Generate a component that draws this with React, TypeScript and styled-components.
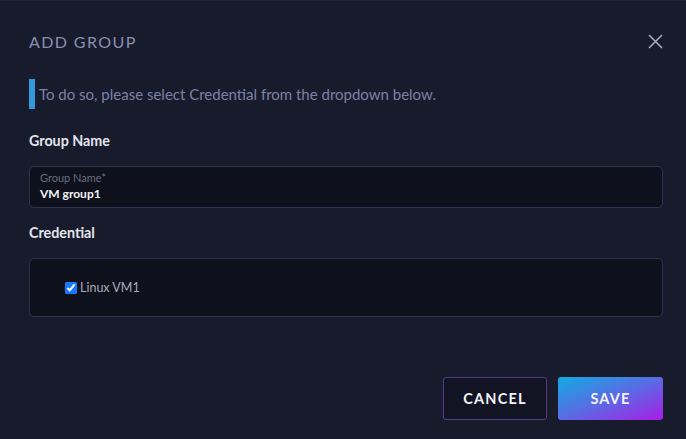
import React, { FC } from "react";
import styled, { createGlobalStyle } from "styled-components";

const GlobalStyle = createGlobalStyle`
  html, body {
    margin: 0;
    padding: 0;
    background: #181b2b;
  }
  body {
    font-family: Lato, "Noto Sans", "Liberation Sans", sans-serif;
    -webkit-font-smoothing: antialiased;
  }
`;

const Dialog = styled.div`
  width: 686px;
  height: 439px;
  box-sizing: border-box;
  padding: 27px 23px 0 29px;
  background: #181b2b;
  border-top: 1px solid #1f2336;
  display: flex;
  flex-direction: column;
`;

const Header = styled.div`
  display: flex;
  align-items: center;
  justify-content: space-between;
  height: 26px;
`;

const Title = styled.h2`
  margin: 0;
  font-size: 16px;
  font-weight: 400;
  letter-spacing: 1.4px;
  color: #8a8eb3;
`;

const CloseButton = styled.button`
  background: none;
  border: none;
  padding: 0;
  margin-right: -2px;
  width: 20px;
  height: 20px;
  display: flex;
  align-items: center;
  justify-content: center;
  cursor: pointer;
`;

const Info = styled.div`
  display: flex;
  align-items: center;
  gap: 4px;
  margin-top: 25px;
  height: 30px;
  font-size: 15px;
  color: #7d81a6;
`;

const InfoBar = styled.span`
  flex: 0 0 6px;
  width: 6px;
  height: 30px;
  background: #3398dc;
`;

const Label = styled.div<{ $gap: number }>`
  margin-top: ${(p) => p.$gap}px;
  line-height: 20px;
  font-size: 14.3px;
  font-weight: 700;
  color: #e4e5ee;
`;

const Field = styled.div<{ $height: number }>`
  margin-top: 15px;
  height: ${(p) => p.$height}px;
  box-sizing: border-box;
  border: 1px solid #2d3250;
  border-radius: 5px;
  background: #0e101c;
`;

const InputField = styled(Field)`
  padding: 4px 10px 0;
  display: flex;
  flex-direction: column;
`;

const FloatLabel = styled.span`
  font-size: 11px;
  line-height: 13px;
  color: #6a6d80;
`;

const Value = styled.span`
  margin-top: 2px;
  font-size: 12px;
  font-weight: 700;
  line-height: 16px;
  color: #f2f2f6;
`;

const OptionList = styled(Field)`
  display: flex;
  align-items: center;
  padding-left: 32px;
`;

const Option = styled.label`
  display: flex;
  align-items: center;
  font-size: 12.5px;
  color: #a9acbb;
  input {
    margin: 0 3px 0 3px;
    width: 12px;
    height: 12px;
    accent-color: #1677ff;
  }
`;

const Footer = styled.div`
  margin-top: 60px;
  display: flex;
  justify-content: flex-end;
  gap: 11px;
`;

const Button = styled.button<{ $primary?: boolean }>`
  width: ${(p) => (p.$primary ? 105 : 104)}px;
  height: 43px;
  box-sizing: border-box;
  border-radius: 3px;
  font-family: inherit;
  font-size: 14.5px;
  font-weight: 700;
  letter-spacing: 1.2px;
  color: #f4f4f8;
  cursor: pointer;
  border: ${(p) => (p.$primary ? "none" : "1px solid #543c8a")};
  background: ${(p) =>
    p.$primary
      ? "linear-gradient(to bottom right, #12abe2 0%, #5a6be4 50%, #a81de6 100%)"
      : "#121424"};
`;

const App: FC = () => {
  return (
    <>
      <GlobalStyle />
      <Dialog>
        <Header>
          <Title>ADD GROUP</Title>
          <CloseButton aria-label="Close">
            <svg width="15" height="15" viewBox="0 0 15 15">
              <path d="M1 1L14 14M14 1L1 14" stroke="#a7a9b6" strokeWidth="1.6" />
            </svg>
          </CloseButton>
        </Header>
        <Info>
          <InfoBar />
          To do so, please select Credential from the dropdown below.
        </Info>
        <Label $gap={22}>Group Name</Label>
        <InputField $height={42}>
          <FloatLabel>Group Name*</FloatLabel>
          <Value>VM group1</Value>
        </InputField>
        <Label $gap={15}>Credential</Label>
        <OptionList $height={59}>
          <Option>
            <input type="checkbox" defaultChecked />
            Linux VM1
          </Option>
        </OptionList>
        <Footer>
          <Button>CANCEL</Button>
          <Button $primary>SAVE</Button>
        </Footer>
      </Dialog>
    </>
  );
};

export default App;
